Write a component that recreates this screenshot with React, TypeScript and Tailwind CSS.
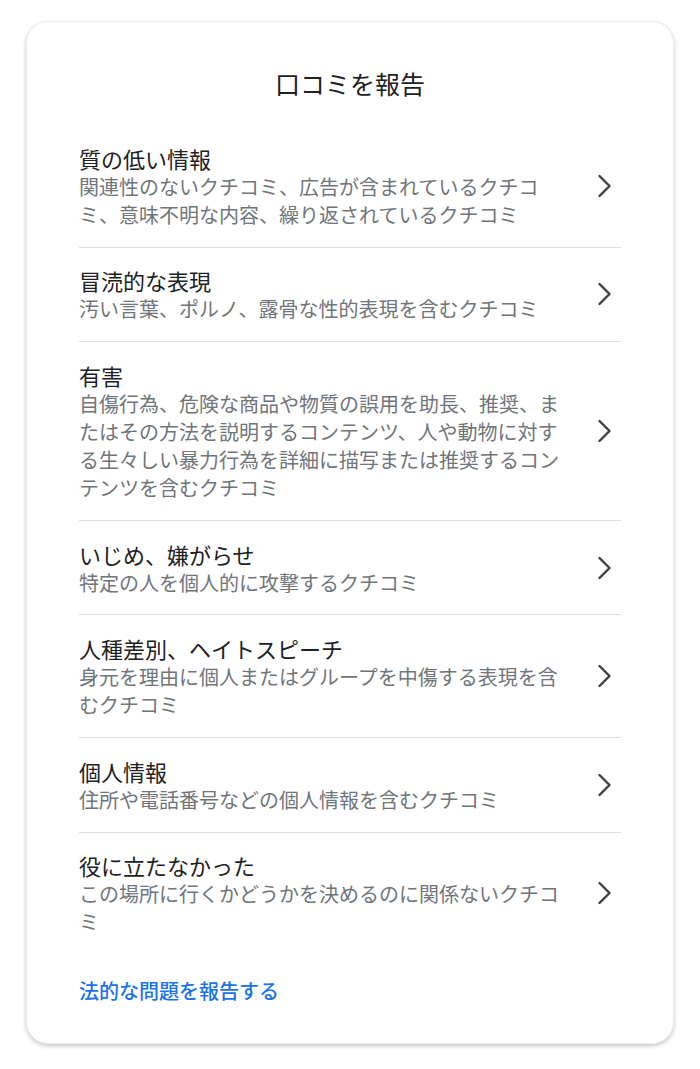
import React from 'react';

interface ReportReason {
  title: string;
  description: string;
}

const reasons: ReportReason[] = [
  {
    title: '質の低い情報',
    description: '関連性のないクチコミ、広告が含まれているクチコミ、意味不明な内容、繰り返されているクチコミ',
  },
  {
    title: '冒涜的な表現',
    description: '汚い言葉、ポルノ、露骨な性的表現を含むクチコミ',
  },
  {
    title: '有害',
    description:
      '自傷行為、危険な商品や物質の誤用を助長、推奨、またはその方法を説明するコンテンツ、人や動物に対する生々しい暴力行為を詳細に描写または推奨するコンテンツを含むクチコミ',
  },
  {
    title: 'いじめ、嫌がらせ',
    description: '特定の人を個人的に攻撃するクチコミ',
  },
  {
    title: '人種差別、ヘイトスピーチ',
    description: '身元を理由に個人またはグループを中傷する表現を含むクチコミ',
  },
  {
    title: '個人情報',
    description: '住所や電話番号などの個人情報を含むクチコミ',
  },
  {
    title: '役に立たなかった',
    description: 'この場所に行くかどうかを決めるのに関係ないクチコミ',
  },
];

function ChevronRight() {
  return (
    <svg viewBox="0 0 24 24" className="w-6 h-6 shrink-0 ml-[24px] mr-[5px]" fill="none">
      <polyline
        points="7.5,2 17.5,12 7.5,22"
        stroke="#3c4043"
        strokeWidth="2.4"
        strokeLinecap="round"
        strokeLinejoin="round"
      />
    </svg>
  );
}

export default function App() {
  return (
    <div
      className="min-h-[1069px] bg-white pt-[21px] pl-[26px]"
      style={{ fontFamily: '"Noto Sans CJK JP", "Noto Sans", sans-serif' }}
    >
      <div className="w-[648px] h-[1023px] rounded-[22px] bg-white border border-[#ececec] shadow-[0_2px_4px_rgba(0,0,0,0.22)] px-[52px] pt-[45px]">
        <h2 className="text-center text-[25px] leading-[32px] text-[#202124]">口コミを報告</h2>

        <ul className="mt-[26px]">
          {reasons.map((r, i) => (
            <li
              key={r.title}
              className={
                'flex items-center py-[17.8px] cursor-pointer ' +
                (i < reasons.length - 1 ? 'border-b border-[#dadce0]' : '')
              }
            >
              <div className="flex-1 min-w-0">
                <div className="text-[22px] leading-[30px] text-[#202124]">{r.title}</div>
                <div className="text-[20px] leading-[28px] text-[#70757a]">{r.description}</div>
              </div>
              <ChevronRight />
            </li>
          ))}
        </ul>

        <a href="#" className="block mt-[23px] text-[20px] leading-[28px] font-medium text-[#1a73e8]">
          法的な問題を報告する
        </a>
      </div>
    </div>
  );
}
